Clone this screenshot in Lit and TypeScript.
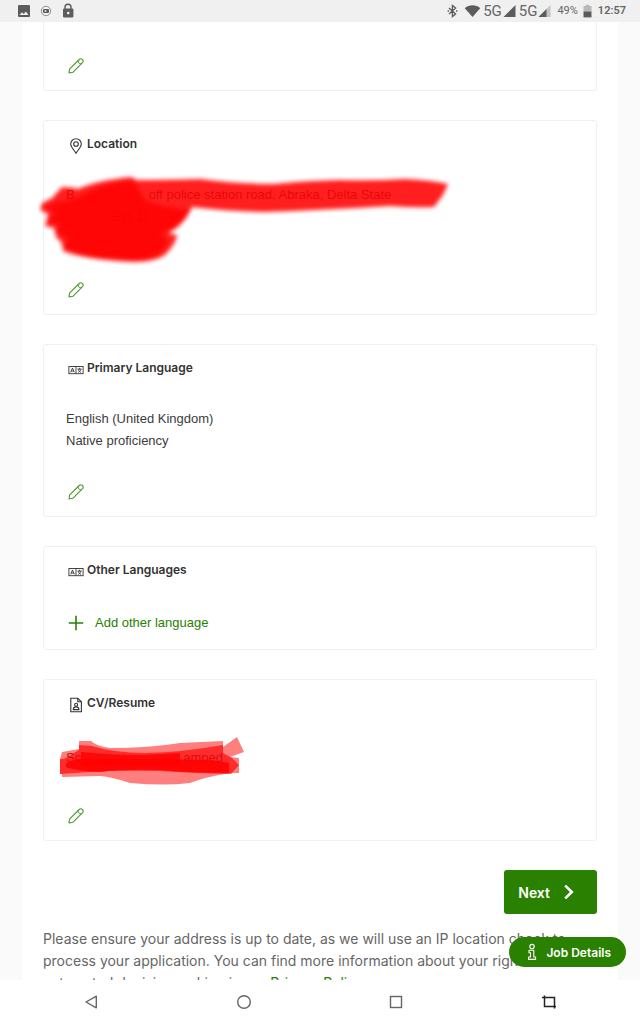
import { LitElement, html, svg, css } from "lit";
import { customElement, property } from "lit/decorators.js";

const pencil = html`<svg width="16" height="16" viewBox="0 0 16 16" fill="none" stroke="currentColor" stroke-width="1.1" stroke-linejoin="round">
  <path d="M1 15 1.5 11.2 11.2 1.5C12.2.6 13.4.6 14.4 1.5 15.4 2.5 15.4 3.7 14.5 4.7L4.9 14.3Z" />
  <path d="M10.2 2.5C10 4.8 11.3 6 13.4 5.8" stroke-width=".9" />
</svg>`;

const pin = svg`<svg width="16" height="16" viewBox="0 0 16 16" fill="none" stroke="currentColor" stroke-width="1.1">
  <path d="M8 15.2C6.5 12.4 2.7 9.3 2.7 6A5.3 5.3 0 0 1 13.3 6C13.3 9.3 9.5 12.4 8 15.2Z" />
  <circle cx="8" cy="6" r="2.3" />
</svg>`;

const language = svg`<svg width="16" height="16" viewBox="0 0 16 16" fill="none" stroke="currentColor" stroke-width=".9">
  <rect x=".9" y="4.5" width="14.2" height="7.2" />
  <path d="M8 4.5V11.7M2.7 10.3 4.5 6 6.3 10.3M3.3 9H5.7M9.5 7.1H13.7M11.6 5.8V7.1M10.3 7.4C10.7 8.8 11.6 9.7 13 10.4M12.9 7.4C12.5 8.8 11.6 9.7 10.2 10.4" />
</svg>`;

const resume = svg`<svg width="16" height="16" viewBox="0 0 16 16" fill="none" stroke="currentColor" stroke-width="1.1">
  <path d="M2.8 1.2H9.8L13.4 4.8V14.8H2.8ZM9.8 1.2V4.8H13.4" />
  <circle cx="8.1" cy="7.8" r="1.5" />
  <path d="M5.3 12.6C5.3 10.6 6.4 9.9 8.1 9.9S10.9 10.6 10.9 12.6Z" />
</svg>`;

const icons: Record<string, unknown> = { pin, language, resume };

@customElement("profile-card")
class ProfileCard extends LitElement {
  @property() heading = "";
  @property() icon = "";
  @property() edit = "";

  static styles = css`
    :host {
      display: flex;
      flex-direction: column;
      align-items: flex-start;
      position: relative;
      box-sizing: border-box;
      border: 1px solid #f0f0f0;
      border-radius: 3px;
      padding: 13px 22px 14px;
      gap: 30px;
    }
    .heading {
      display: flex;
      align-items: center;
      gap: 3px;
      margin: 0;
      padding-left: 2px;
      font-family: Inter, sans-serif;
      font-size: 12px;
      line-height: 20px;
      font-weight: 600;
      color: #333;
    }
    .heading svg {
      margin-top: 3px;
    }
    .edit {
      display: grid;
      place-items: center;
      width: 20px;
      height: 20px;
      padding: 0;
      border: 0;
      background: none;
      color: #4a9a2c;
      cursor: pointer;
    }
  `;

  render() {
    return html`
      ${this.heading ? html`<h2 class="heading">${icons[this.icon]}${this.heading}</h2>` : null}
      <slot></slot>
      ${this.edit ? html`<button class="edit" aria-label=${this.edit}>${pencil}</button>` : null}
    `;
  }
}

@customElement("app-root")
class AppRoot extends LitElement {
  static styles = css`
    :host {
      display: flex;
      flex-direction: column;
      height: 100vh;
      overflow: hidden;
      background: #fafafa;
      color: #3c3c3c;
      font-family: "Liberation Sans", Arial, sans-serif;
      font-size: 13px;
      line-height: 22px;
    }
    .status {
      flex: none;
      height: 22px;
      display: flex;
      align-items: center;
      justify-content: space-between;
      padding: 0 14px 0 17px;
      background: #f0f0f0;
      color: #666;
      font-family: Roboto, sans-serif;
    }
    .group {
      display: flex;
      align-items: center;
    }
    .left {
      gap: 8px;
    }
    .net {
      font-size: 15px;
      padding-left: 2px;
    }
    .percent {
      font-size: 11px;
      padding: 0 5px;
    }
    .time {
      font-size: 11px;
      font-weight: 600;
      padding-left: 6px;
    }
    .viewport {
      flex: 1;
      min-height: 0;
      position: relative;
      overflow: hidden;
    }
    .page {
      box-sizing: border-box;
      min-height: 100%;
      margin: 0 22px;
      padding: 0 21px;
      background: #fff;
      display: flex;
      flex-direction: column;
      gap: 29px;
    }
    .first {
      border-top: 0;
      border-radius: 0 0 3px 3px;
      padding-top: 34px;
    }
    .text {
      margin: 0;
    }
    .address {
      min-height: 66px;
    }
    .file {
      padding: 4px 0 7px;
    }
    .street {
      padding-left: 74px;
    }
    .town {
      padding-left: 46px;
    }
    .suffix {
      padding-left: 102px;
    }
    .mark {
      position: absolute;
      pointer-events: none;
    }
    .mark-address {
      left: -6px;
      top: 49px;
    }
    .mark-file {
      left: 12px;
      top: 51px;
    }
    .add {
      display: flex;
      align-items: center;
      gap: 11px;
      height: 25px;
      padding: 0 0 0 2px;
      border: 0;
      background: none;
      font: inherit;
      color: #2a8000;
      cursor: pointer;
    }
    .next,
    .details {
      display: flex;
      align-items: center;
      border: 0;
      background: #2a8000;
      color: #fff;
      font-family: Inter, sans-serif;
      font-weight: 600;
      cursor: pointer;
    }
    .next {
      align-self: flex-end;
      gap: 12px;
      height: 44px;
      padding: 0 21px 0 14px;
      border-radius: 3px;
      font-size: 14px;
    }
    .footer {
      display: flex;
      flex-direction: column;
      gap: 14px;
    }
    .note {
      margin: 0;
      font-family: Inter, sans-serif;
      font-size: 14px;
      color: #666;
    }
    .note a {
      color: #2a8000;
      text-decoration: none;
    }
    .details {
      position: absolute;
      right: 14px;
      bottom: 13px;
      gap: 6px;
      height: 30px;
      padding: 0 15px;
      border-radius: 15px;
      font-size: 12px;
    }
    .nav {
      flex: none;
      height: 44px;
      display: flex;
      align-items: center;
      justify-content: space-between;
      padding: 0 82px;
      background: #fff;
      color: #666;
    }
    .nav button {
      display: grid;
      place-items: center;
      width: 18px;
      height: 18px;
      padding: 0;
      border: 0;
      background: none;
      color: inherit;
    }
  `;

  render() {
    return html`
      <header class="status">
        <div class="group left">
          <svg width="14" height="16" viewBox="0 0 14 16"><path fill="#5c5c5c" fill-rule="evenodd" d="M2 2H12Q13 2 13 3V13Q13 14 12 14H2Q1 14 1 13V3Q1 2 2 2ZM2.5 12H11.5L8.8 8.5 6.7 11 5 9.3Z" /></svg>
          <svg width="14" height="16" viewBox="0 0 14 16"><circle cx="7" cy="8" r="4.7" fill="none" stroke="#777" stroke-width=".8" /><rect x="4" y="6" width="6" height="4" rx="1" fill="#5c5c5c" /><circle cx="6.5" cy="8" r="1" fill="#ddd" /></svg>
          <svg width="14" height="16" viewBox="0 0 14 16"><path d="M4 7V4.2A3 3 0 0 1 10 4.2V7" fill="none" stroke="#5c5c5c" stroke-width="1.4" /><rect x="2" y="5.6" width="10.4" height="9" rx="1" fill="#5c5c5c" /><circle cx="7.2" cy="10" r="1.3" fill="#f0f0f0" /></svg>
        </div>
        <div class="group">
          <svg width="18" height="16" viewBox="0 0 18 16" fill="none" stroke="#5c5c5c" stroke-width="1.3"><path d="M3 5 9.6 11 6.4 13.6V2.4L9.6 5 3 11M1.6 8H3M10 8H11.4" /></svg>
          <svg width="17" height="16" viewBox="0 0 17 16"><path fill="#5c5c5c" d="M.8 5.2C5 1.4 12 1.4 16.2 5.2L8.5 14Z" /></svg>
          <span class="net">5G</span>
          <svg width="15" height="16" viewBox="0 0 15 16"><path fill="#5c5c5c" d="M13.5 2V14H1.5Z" /></svg>
          <span class="net">5G</span>
          <svg width="15" height="16" viewBox="0 0 15 16"><path fill="#c4c4c4" d="M13.5 2V14H1.5Z" /><path fill="#5c5c5c" d="M9.5 6V14H1.5Z" /></svg>
          <span class="percent">49%</span>
          <svg width="9" height="16" viewBox="0 0 9 16"><path fill="#b8b8b8" d="M.5 3H2.8V1.8H6.2V3H8.5V9H.5Z" /><path fill="#5c5c5c" d="M.5 8.6H8.5V14.4H.5Z" /></svg>
          <span class="time">12:57</span>
        </div>
      </header>

      <div class="viewport">
        <main class="page">
          <profile-card class="first" edit="Edit details"></profile-card>

          <profile-card heading="Location" icon="pin" edit="Edit location">
            <p class="text address">B<span class="street">off police station road, Abraka, Delta State</span><br /><span class="town">Est, D</span></p>
            <svg class="mark mark-address" width="414" height="100" viewBox="38 170 414 100">
              <defs><filter id="soft" x="-5%" y="-10%" width="110%" height="120%"><feGaussianBlur stdDeviation="2" /></filter></defs>
              <g filter="url(#soft)" fill="#f00">
                <path opacity=".88" d="M62 187Q72 187 78 189Q98 180 132 177L136 180Q165 180 200 179Q235 184 275 184Q300 181 340 180Q375 181 405 179Q430 180 448 184L443 195 434 207Q415 208 390 206Q320 210 265 212Q225 211 192 207Q184 226 168 233L177 235Q176 244 165 255Q155 262 135 262Q85 260 63 251L62 243 56 237 54 228 45 226 48 214 40 210 42 203 52 198Z" />
                <path opacity=".8" d="M76 198Q105 182 134 181L145 200Q165 208 190 210Q178 229 160 234Q174 238 160 253Q148 261 126 259Q82 258 64 247L68 239 57 232 60 224 47 222 56 212 43 207Z" />
              </g>
            </svg>
          </profile-card>

          <profile-card heading="Primary Language" icon="language" edit="Edit primary language">
            <p class="text">English (United Kingdom)<br />Native proficiency</p>
          </profile-card>

          <profile-card heading="Other Languages" icon="language">
            <button class="add">
              <svg width="16" height="16" viewBox="0 0 16 16" stroke="currentColor" stroke-width="1.6"><path d="M8 .8V15.2M.8 8H15.2" /></svg>
              Add other language
            </button>
          </profile-card>

          <profile-card heading="CV/Resume" icon="resume" edit="Edit CV/Resume">
            <p class="text file">Sc<span class="suffix">amped</span></p>
            <svg class="mark mark-file" width="190" height="56" viewBox="56 731 190 56" fill="#f00">
              <path opacity=".5" d="M79 741H91Q96 746 110 748Q150 748 180 743L223 741V747L237 737 244 752 230 757 239 758V773H230Q205 777 190 783Q165 786 130 783Q112 777 100 776L62 777V774H60V759L62 752 79 749Z" />
              <path opacity=".65" d="M79 750V745L92 746Q115 753 145 753Q185 752 223 745V753L232 758 239 765 231 774Q190 773 160 771Q120 770 90 772L60 774V759H64Z" />
              <path opacity=".85" d="M66 763 78 759Q110 759 150 759L211 760 229 763V773Q190 773 160 770Q120 769 100 772Q75 771 66 767Z" />
              <path opacity=".8" d="M81 752Q110 755 145 755L180 753V766H81Z" />
            </svg>
          </profile-card>

          <div class="footer">
            <button class="next">
              Next
              <svg width="14" height="16" viewBox="0 0 14 16" fill="none" stroke="currentColor" stroke-width="2.6"><path d="M3.2 1.6 9.8 8 3.2 14.4" /></svg>
            </button>
            <p class="note">
              Please ensure your address is up to date, as we will use an IP location check to
              process your application. You can find more information about your rights and
              automated decision making in our <a href="#privacy">Privacy Policy</a>.
            </p>
          </div>
        </main>

        <button class="details">
          <svg width="16" height="18" viewBox="0 0 16 18" fill="none" stroke="currentColor" stroke-width="1.1" stroke-linejoin="round"><circle cx="8" cy="3.6" r="2.2" /><path d="M5 7.3H9.8V14H11.6V16.4H4.6V14H6.5V9.7H5Z" /></svg>
          Job Details
        </button>
      </div>

      <nav class="nav">
        <button aria-label="Back"><svg width="18" height="18" viewBox="0 0 18 18" fill="none" stroke="currentColor" stroke-width="1.4" stroke-linejoin="round"><path d="M14.3 3.2V14.8L4 9Z" /></svg></button>
        <button aria-label="Home"><svg width="18" height="18" viewBox="0 0 18 18" fill="none" stroke="currentColor" stroke-width="1.4"><circle cx="9" cy="9" r="6.3" /></svg></button>
        <button aria-label="Recent apps"><svg width="18" height="18" viewBox="0 0 18 18" fill="none" stroke="currentColor" stroke-width="1.4"><rect x="3.5" y="3.5" width="11" height="11" /></svg></button>
        <button aria-label="Screenshot"><svg width="18" height="18" viewBox="0 0 18 18" fill="none" stroke="#222" stroke-width="1.5"><path d="M2 4.5H14.5V15.5M4.5 2.5V13.5H16" /></svg></button>
      </nav>
    `;
  }
}
